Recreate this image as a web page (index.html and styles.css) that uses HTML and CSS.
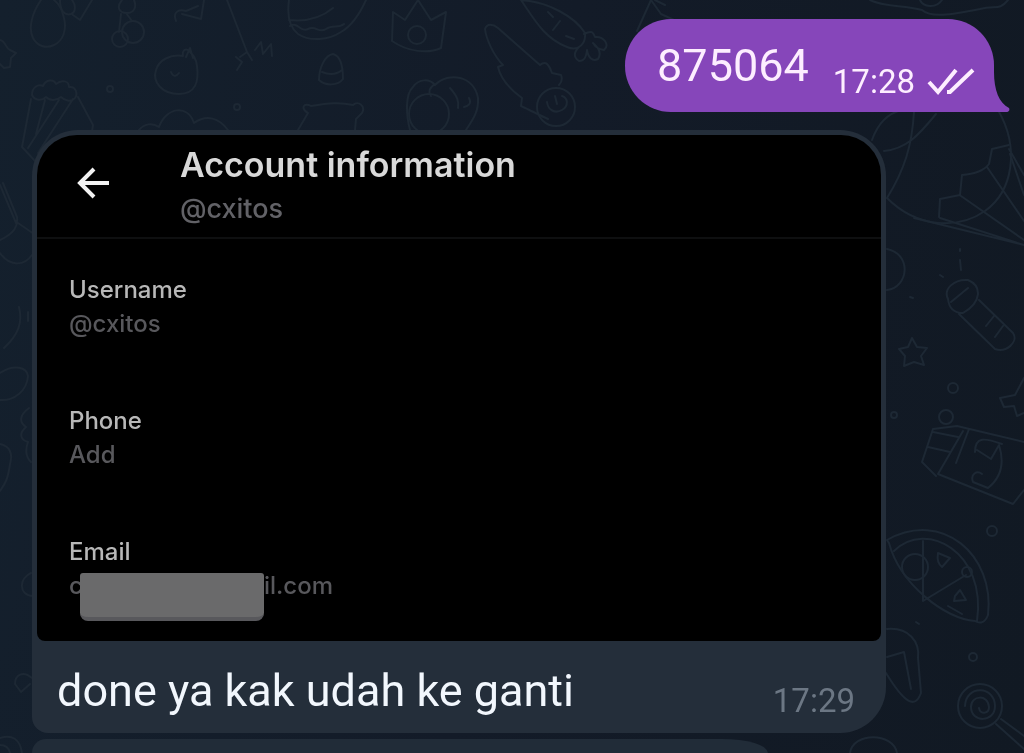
FILE: index.html
```html
<!DOCTYPE html>
<html lang="id">

<head>
    <meta charset="UTF-8" />
    <meta name="viewport" content="width=device-width, initial-scale=1.0" />
    <title>Chat</title>
    <link rel="stylesheet" href="styles.css">
</head>

<body>
    <!-- wallpaper -->
    <svg class="wallpaper" viewBox="0 0 1024 753" preserveAspectRatio="xMidYMid slice" aria-hidden="true">
        <!-- top left: egg, cherries, bread, palm, burger -->
        <path d="M41 0C32 13 28 28 33 38c4 8 13 11 21 7 9-4 13-15 10-27C62 9 58 3 54 0" />
        <path d="M60 0c0 10 4 16 11 14 5-2 5-9 1-14M73 15l7 5L92 0M0 40c6 1 5 8 10 10l6 3-5 5-1 9-6 1-4-4" />
        <path d="M122 0c-6 7-3 13 5 13 7 0 10-6 7-13M121 14l-2 18M126 13l6 8" />
        <circle cx="133" cy="32" r="11" />
        <circle cx="120" cy="39" r="8" />
        <path d="M176 21c-4-10 4-12 10-10l12-5M182 14l19 5 3-19M227 0l20 52M252 60l-5-8-7 5M236 57l6 5-5 8M255 50l6-8 2 12 8-10 1 12" />
        <path d="M289 0c-2 14-1 26 9 34 12 8 31 6 43-2C353 25 361 11 366 0M289 20c18 2 32-2 44-12M290 26c8-5 10 7 18 3s11 5 18 0 12 0 18-5" />
        <!-- tomato, popcorn, cupcake, pig -->
        <path d="M190 52c-4-5-8-2-7 4-13-2-24 4-27 14-4 12 6 24 23 24s20-13 18-28c-1-8-4-11-7-14zM186 57l4-9 3 10M171 72c2 5 5 5 8 1" />
        <path d="M32 95c0-8 6-11 11-9 3-7 11-7 13-2 6-5 13-3 13 3 7-1 9 7 6 11-4 5-11 2-14-1-5 4-11 4-15 0-4 4-11 4-14-2zM31 99l-9 48 15 16M78 97l15 28-2 13M59 100l-31 48M73 99l-35 54M45 100l-9 34" />
        <path d="M139 130c5-6 13-8 20-3 7-20 29-23 35-4 13-9 25-5 34 7M319 80c0-12 6-25 14-26 8 2 10 15 10 25-5 7-18 7-24 1zM322 72c7 3 14 3 20-2M298 130l10-17c-8-5-4-11 3-7 18-3 29-4 42-1 5-5 13 1 9 8l-6 6-1 11" />
        <circle cx="110" cy="89" r="3" />
        <circle cx="237" cy="107" r="3" />
        <!-- crown, carrot, comet -->
        <path d="M393 12l12 8L418 0l13 20 15-8-5 36c-13 6-33 4-49-7z" />
        <circle cx="417" cy="35" r="9" />
        <path d="M521 0c13 19 23 38 46 47 12 5 19-4 18-14C575 17 549 2 521 0zM548 12l5 5M553 30l7-9M566 36l8 3M584 34c8-4 9-2 11 3 9-1 15 8 9 13-5-1-8-2-11-7 6 5 9 10 5 16-6 3-10-2-11-9-1 8-3 11-8 11-6-4-5-9 0-14" />
        <path d="M548 119c-9-4-18-9-27-13l1-8c-11-8-21-18-24-31l5-2c-10-10-17-27-18-36 2-6 8-5 13-1l42 37c6-5 9 0 12 8l9 2c2 5 0 8-2 10" />
        <circle cx="556" cy="107" r="19" />
        <path d="M547 102c1 8 8 12 15 8 7-4 6-12 0-14M555 96l2 8" />
        <path d="M410 130c-4-15-5-36 3-43 6-9 17-8 22-2 14-14 39-9 43 13 1 15-7 24-12 32M435 84c-6 4-7 8-4 12M450 88c8 9 9 14 8 20M469 98c3 6-1 8-5 9" />
        <circle cx="429" cy="114" r="20" />
        <path d="M637 31L651 0l10 14 50 23M665 5l-10-5" />
        <path d="M870 0c14 7 33 5 52 10 9 8 28 5 58-1 16-4 19 2 28-9M920 0c3 7 16 9 22 0" />
        <!-- right: parachute, umbrella, flashlight, stars -->
        <path d="M872 140c6-17 17-27 30-30M884 151c22-2 34-15 52-37M914 112c-2 33-9 57-27 86 31 31 72 31 98 13 28-20 35-63 13-101" />
        <path d="M1009 145l-17 4-3 15c-6 8-16 10-27 11l-2 20-20 4-1 18M1009 149l15 26M1010 154l14 41M987 167l37 54M961 196l63 44M940 218l84 27M914 218l110 27" />
        <path d="M887 249c25 5 22 38 0 41M948 299c-5-10 6-20 20-19 14 6 14 22-5 33-9 0-14-5-15-14zM951 302l17-14M979 300l34 33c6 9-7 20-18 16l-36-35M994 316l-8 10M1003 326l-8 11" />
        <path d="M960 249v2M960 260l1 10M940 275l3 2M910 297l3 1" />
        <path d="M912 338l5 9 10 1-6 8 3 9-10-3-10 4 1-10-6-7 9-2zM1024 378l-9 17-15 3 4 9 10-1 3 10 7-3" />
        <circle cx="953" cy="388" r="5" />
        <circle cx="894" cy="415" r="3" />
        <!-- soda can -->
        <path d="M957 426l-24 3-11 33 14 14M957 426l67 16M938 474l75 30 11-14M938 474l25-43M969 429l-13 34M933 432l25 5M928 447l22 5M975 452c0-16 10-14 27-8M977 450l14 9 8-14c7 22-1 35-11 43l-15-6c-3-8 4-12 9-8" />
        <circle cx="946" cy="417" r="7" />
        <circle cx="992" cy="531" r="5" />
        <!-- pizza slice -->
        <path d="M887 540c55-31 108 15 101 75-3 8-8 9-13 6-30-2-75-37-86-78zM894 551c32-32 93 1 83 70M923 541v60l43-26" />
        <circle cx="915" cy="567" r="13" />
        <circle cx="967" cy="572" r="5" />
        <path d="M938 553l12 5-8 9c-4-3-5-8-4-14zM955 596l5-6 6 10-12 1zM948 606l14 8" />
        <path d="M887 629c22-2 33 13 31 29l3 35c-6 16-16 11-35-20M887 657l17-5 7 37M916 622l3 2" />
        <circle cx="973" cy="657" r="4" />
        <!-- lollipop -->
        <circle cx="980" cy="706" r="22" />
        <path d="M965 706c1-22 30-20 30 0 0 17-24 17-24 1 0-12 17-13 18 0 0 7-9 8-10 1M1001 719l23 17M996 724l28 25M850 753c3-21 43-21 47 0" />
        <!-- left column -->
        <path d="M0 185l16 38M3 183l14 34c1 9-2 16-17 23M18 223l16 11M0 253c11 15 25 12 32 2M19 307c4 16-1 28-15 41M28 312v9M0 373c14-9 27-6 28 3-1 15-14 25-28 24M29 408c-11 8-9 15-3 19-8 7-5 13 2 15-3 8-2 15 3 20M0 444c10 2 13 10 10 20-2 15-5 20-10 27" />
        <path d="M31 573c-12 5-13 22 2 23M32 678c-9-8-17-3-17 6l6 8 9-8M0 738c12-4 20 1 22 15M0 745c6 0 9 3 10 8" />
    </svg>

    <main class="chat">
        <div class="message outgoing">
            <span class="text">875064</span>
            <span class="meta">
                <time>17:28</time>
                <svg class="checks" viewBox="0 0 48 30" role="img" aria-label="Read">
                    <path d="M2 15l9 10L29 3M20 25l3 0L46 3" />
                </svg>
            </span>
            <svg class="tail" viewBox="0 0 17 40" aria-hidden="true">
                <path d="M0 0h1c0 18 5 31 15 36 1 2 0 4-3 4H0z" />
            </svg>
        </div>

        <div class="message incoming">
            <div class="photo">
                <header class="photo-header">
                    <button class="back-button" type="button" aria-label="Back">
                        <svg viewBox="0 0 34 34" aria-hidden="true">
                            <path d="M32 17H4M17 3L3 17l14 14" />
                        </svg>
                    </button>
                    <div>
                        <h1>Account information</h1>
                        <p>@cxitos</p>
                    </div>
                </header>
                <dl class="fields">
                    <div>
                        <dt>Username</dt>
                        <dd>@cxitos</dd>
                    </div>
                    <div>
                        <dt>Phone</dt>
                        <dd>Add</dd>
                    </div>
                    <div>
                        <dt>Email</dt>
                        <dd class="email"><span class="email-start">c</span><span class="redacted"></span><span>il.com</span></dd>
                    </div>
                </dl>
            </div>
            <div class="caption">
                <span class="text">done ya kak udah ke ganti</span>
                <time>17:29</time>
            </div>
        </div>

        <div class="message next"></div>
    </main>
</body>

</html>
```
FILE: styles.css
```css
* {
    box-sizing: border-box;
}

body {
    margin: 0;
    background: linear-gradient(100deg, #14202d 0%, #131b28 50%, #111923 100%);
    font-family: Roboto, "Liberation Sans", sans-serif;
}

h1,
p,
dl,
dd {
    margin: 0;
}

.wallpaper {
    position: fixed;
    inset: 0;
    width: 100%;
    height: 100%;
    fill: none;
    stroke: #1d2834;
    stroke-width: 2;
    stroke-linecap: round;
    stroke-linejoin: round;
}

.chat {
    position: relative;
    display: flex;
    flex-direction: column;
    min-height: 100vh;
    padding: 19px 30px 0 32px;
}

.message {
    position: relative;
}

.text {
    font-size: 45px;
    line-height: 52px;
}

time {
    font-size: 33px;
    line-height: 40px;
}

/* outgoing */
.outgoing {
    align-self: flex-end;
    display: flex;
    align-items: flex-end;
    gap: 24px;
    height: 93px;
    padding: 0 19px 20px 32px;
    border-radius: 46px 46px 0 46px;
    background: #8646ba;
    color: #fdeeff;
}

.outgoing .meta {
    display: flex;
    align-items: center;
    gap: 12px;
    margin-bottom: -10px;
}

.checks {
    width: 48px;
    height: 30px;
    fill: none;
    stroke: #fdeeff;
    stroke-width: 4;
}

.tail {
    position: absolute;
    right: -16px;
    bottom: 0;
    width: 17px;
    height: 40px;
    fill: #8646ba;
}

/* incoming */
.incoming {
    margin: 18px 108px 6px 0;
    padding: 5px 5px 0;
    border-radius: 46px 46px 46px 16px;
    background: #242e3a;
}

.photo {
    overflow: hidden;
    border-radius: 40px 40px 8px 8px;
    background: #000;
    font-family: Inter, "Liberation Sans", sans-serif;
}

.photo-header {
    display: flex;
    align-items: flex-start;
    gap: 69px;
    padding: 10px 40px 12px;
    border-bottom: 2px solid #0e0f10;
}

.back-button {
    width: 34px;
    height: 34px;
    margin-top: 21px;
    padding: 0;
    border: none;
    background: none;
    cursor: pointer;
}

.back-button svg {
    display: block;
    fill: none;
    stroke: #f2f2f2;
    stroke-width: 4;
}

.photo-header h1 {
    color: #d9d9d9;
    font-size: 34px;
    font-weight: 600;
    line-height: 40px;
}

.photo-header p {
    margin-top: 8px;
    color: #626267;
    font-size: 27px;
    font-weight: 500;
    line-height: 32px;
}

.fields {
    display: flex;
    flex-direction: column;
    gap: 63px;
    padding: 34px 32px 20px;
    font-size: 24px;
    font-weight: 500;
    line-height: 34px;
}

.fields dt {
    color: #b8b8b8;
}

.fields dd {
    color: #58585c;
}

.email {
    display: flex;
    align-items: flex-start;
}

.email-start {
    width: 11px;
}

/* sits over the end of the first letter */
.redacted {
    position: relative;
    width: 184px;
    height: 48px;
    margin-top: 4px;
    border-bottom: 4px solid #58585c;
    border-radius: 3px 3px 8px 8px;
    background: #6a6a6b;
}

.caption {
    display: flex;
    align-items: flex-end;
    justify-content: space-between;
    padding: 24px 26px 16px 20px;
    color: #f2f7fd;
}

.caption time {
    margin-bottom: -4px;
    color: #6c7784;
}

.next {
    flex: 1;
    min-height: 14px;
    margin-right: 226px;
    border-radius: 14px 46px 0 0 / 14px 14px 0 0;
    background: #212c38;
}
```
